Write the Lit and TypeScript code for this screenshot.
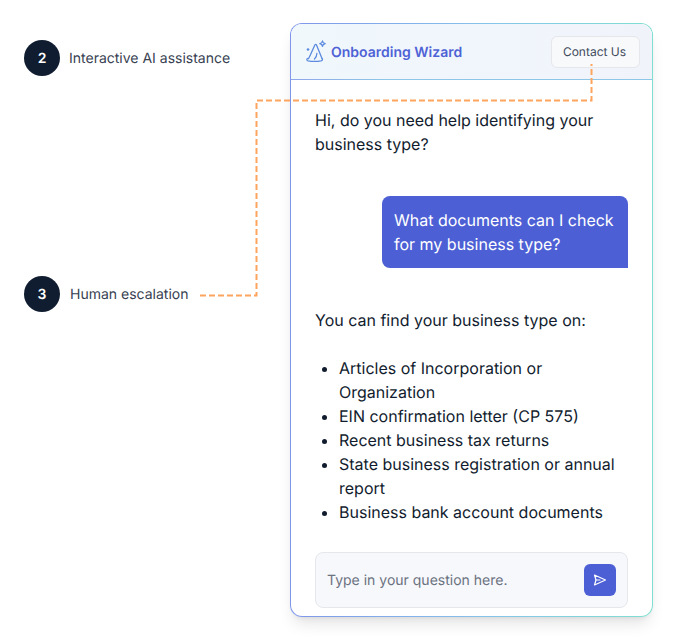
import { LitElement, html, css, svg } from "lit";
import { customElement } from "lit/decorators.js";

@customElement("app-root")
export class AppRoot extends LitElement {
  static styles = css`
    :host { display: block; width: 676px; height: 640px; overflow: hidden; background: #fff; font-family: Inter, "Noto Sans", sans-serif; color: #111c2e; text-rendering: geometricPrecision; }
    * { box-sizing: border-box; }
    .page { position: relative; display: flex; height: 640px; padding: 23px 0 0 24px; }
    .steps { width: 266px; flex: none; padding-top: 17px; display: flex; flex-direction: column; gap: 200px; }
    .step { display: flex; align-items: center; gap: 9px; height: 36px; font-size: 14px; line-height: 20px; color: #374151; }
    .step.two { gap: 10px; }
    .label { padding-top: 1px; }
    .num { width: 36px; height: 36px; border-radius: 50%; background: #101d30; color: #fff; font-weight: 600; font-size: 14px; display: flex; align-items: center; justify-content: center; padding-top: 1px; }
    .card { width: 363px; height: 594px; border: 1px solid transparent; border-radius: 12px;
      background: linear-gradient(#fff, #fff) padding-box, linear-gradient(90deg, #7f96ea 0%, #86c4ea 55%, #7fdfd0 100%) border-box;
      box-shadow: 0 10px 15px -3px rgba(0,0,0,.1), 0 4px 6px -4px rgba(0,0,0,.1); display: flex; flex-direction: column; }
    .head { height: 56px; flex: none; display: flex; align-items: center; justify-content: space-between; padding: 0 12px 0 14px; border-radius: 11px 11px 0 0;
      background: linear-gradient(90deg, #8fa6ea, #8dc6e6 25%) bottom / 100% 1px no-repeat, linear-gradient(90deg, #f0f8fc, #f1f3fb); }
    .brand { display: flex; align-items: center; gap: 2px; font-size: 14px; font-weight: 600; color: #4e62d6; }
    .brand svg { display: block; }
    .contact { width: 89px; height: 32px; border: 1px solid #e5e7eb; border-radius: 6px; background: #f8f9fb; color: #414b5c; font: 400 12px/16px Inter, sans-serif; padding: 0 2px 0 0; text-rendering: geometricPrecision; }
    .body { flex: 1; padding: 28px 24px 8px; font-size: 16px; line-height: 24px; color: #111c2e; }
    p { margin: 0; }
    .user { margin: 40px 0 40px auto; width: 246px; height: 72px; padding: 12px; background: #4c5fd5; color: #fff; border-radius: 8px 8px 0 8px; }
    ul { margin: 24px 0 0; padding: 0 0 0 24px; }
    .input { margin: 0 24px 8px; height: 56px; flex: none; border: 1px solid #e5e7eb; border-radius: 8px; background: #f7f8fc; display: flex; align-items: center; justify-content: space-between; padding: 0 11px; font-size: 14px; color: #6b7280; }
    .send { width: 32px; height: 32px; border-radius: 6px; background: #4c5fd5; display: flex; align-items: center; justify-content: center; }
    .wire { position: absolute; left: 0; top: 0; pointer-events: none; }
  `;

  render() {
    return html`
      <div class="page">
        <div class="steps">
          <div class="step"><span class="num">2</span><span class="label">Interactive AI assistance</span></div>
          <div class="step two"><span class="num">3</span><span class="label">Human escalation</span></div>
        </div>
        <div class="card">
          <div class="head">
            <div class="brand">
              <svg width="24" height="24" viewBox="0 0 24 24" fill="none" stroke="#5b8ade" stroke-width="1.3" stroke-linecap="round" stroke-linejoin="round">
                <path d="M2.500 18.500C1.500 19 1.500 20.500 3 20.800c4 .7 9 .7 13 0 1.500-.3 2-1.800 1-2.300" />
                <path d="M3.500 18.800C6 14 8 9 10 4.800c.4-.7 1-.7 1.400 0l5.600 13.700" />
                <path d="M9.500 19c1.500-1.500 2.300-3.300 2.400-5.500" />
                <path d="M17.500 1c.3 1.700 1 2.400 2.700 2.700-1.700.3-2.400 1-2.700 2.700-.3-1.700-1-2.400-2.700-2.700 1.700-.3 2.400-1 2.700-2.700Z" />
                <path d="M3 8.700v1.600M2.200 9.500h1.600" />
              </svg>
              <span>Onboarding Wizard</span>
            </div>
            <button class="contact">Contact Us</button>
          </div>
          <div class="body">
            <p>Hi, do you need help identifying your business type?</p>
            <div class="user">What documents can I check for my business type?</div>
            <p>You can find your business type on:</p>
            <ul>
              <li>Articles of Incorporation or Organization</li>
              <li>EIN confirmation letter (CP 575)</li>
              <li>Recent business tax returns</li>
              <li>State business registration or annual report</li>
              <li>Business bank account documents</li>
            </ul>
          </div>
          <div class="input">
            <span>Type in your question here.</span>
            <span class="send">
              <svg width="14" height="14" viewBox="0 0 14 14" fill="none" stroke="#fff" stroke-width="1.2" stroke-linejoin="round" stroke-linecap="round">
                <path d="M1.500 2 12.500 7 1.500 12 3 7Z" /><path d="M3 7h4" />
              </svg>
            </span>
          </div>
        </div>
        <svg class="wire" width="676" height="640" fill="none">
          ${svg`<path d="M200 295.500H256.500V100.500H591.500V64" stroke="#fda55f" stroke-width="2" stroke-dasharray="6 3" />`}
        </svg>
      </div>
    `;
  }
}
